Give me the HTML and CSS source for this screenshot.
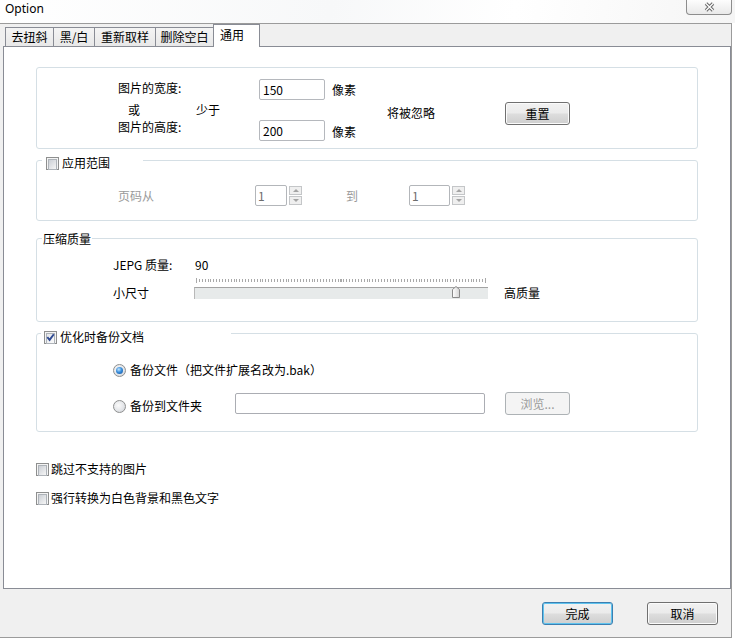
FILE: index.html
```html
<!DOCTYPE html>
<html lang="zh-CN">
<head>
<meta charset="utf-8">
<title>Option</title>
<link rel="stylesheet" href="styles.css">
</head>
<body>
<div class="titlebar">
  <span class="title">Option</span>
  <div class="close-btn">
    <svg class="close-x" width="11" height="10" viewBox="0 0 11 10"><path d="M2 1.5 L9 8.5 M9 1.5 L2 8.5" stroke="#6a6a6a" stroke-width="3.4"/><path d="M2 1.5 L9 8.5 M9 1.5 L2 8.5" stroke="#ffffff" stroke-width="1.3"/></svg>
  </div>
</div>
<div class="client">
  <div class="tabs">
    <div class="tab tab-deskew">去扭斜</div>
    <div class="tab tab-bw">黑/白</div>
    <div class="tab tab-resample">重新取样</div>
    <div class="tab tab-blank">删除空白</div>
    <div class="tab active">通用</div>
  </div>
  <div class="panel">
    <div class="group size-group">
      <div class="size-labels">
        <div class="size-label">图片的宽度:</div>
        <div class="size-label or">或</div>
        <div class="size-label last">图片的高度:</div>
      </div>
      <div class="less">少于</div>
      <div class="size-inputs">
        <input class="textbox size-box" value="150">
        <input class="textbox size-box" value="200">
      </div>
      <div class="units"><div>像素</div><div class="unit-last">像素</div></div>
      <div class="ignored">将被忽略</div>
      <button class="btn reset">重置</button>
    </div>

    <div class="group range-group">
      <div class="legend range-legend"><span class="cb"></span><span>应用范围</span></div>
      <div class="range-row">
        <span class="range-label">页码从</span>
        <input class="spin-box" value="1" disabled>
        <div class="spin-btns"><span class="spin-btn up"></span><span class="spin-btn down"></span></div>
        <span class="range-to">到</span>
        <input class="spin-box wide" value="1" disabled>
        <div class="spin-btns"><span class="spin-btn up"></span><span class="spin-btn down"></span></div>
      </div>
    </div>

    <div class="group quality-group">
      <div class="legend quality-legend">压缩质量</div>
      <div class="quality-grid">
        <span class="q-label">JEPG 质量:</span><span class="q-value">90</span><span></span>
        <span></span><div class="ticks"></div><span></span>
        <span class="q-label q-bottom">小尺寸</span>
        <div class="track">
          <svg class="thumb" width="8" height="12" viewBox="0 0 8 12"><defs><linearGradient id="tg" x1="0" y1="0" x2="1" y2="0"><stop offset="0" stop-color="#ffffff"/><stop offset="1" stop-color="#d4d4d4"/></linearGradient></defs><path d="M0.5 3.5 L4 0.5 L7.5 3.5 V11.5 H0.5 Z" fill="url(#tg)" stroke="#8a8a8a"/></svg>
        </div>
        <span class="q-high q-bottom">高质量</span>
      </div>
    </div>

    <div class="group backup-group">
      <div class="legend backup-legend"><span class="cb checked"><svg width="9" height="9" viewBox="0 0 9 9"><path d="M1.3 4.2 L3.6 6.9 L7.8 1.2" fill="none" stroke="#2f4a92" stroke-width="1.9"/></svg></span><span>优化时备份文档</span></div>
      <div class="backup-row"><span class="radio checked"></span><span>备份文件（把文件扩展名改为.bak）</span></div>
      <div class="backup-row second">
        <div class="radio-label"><span class="radio"></span><span>备份到文件夹</span></div>
        <input class="textbox folder-box" value="">
        <button class="btn browse" disabled>浏览...</button>
      </div>
    </div>

    <div class="check-row first"><span class="cb"></span><span>跳过不支持的图片</span></div>
    <div class="check-row"><span class="cb"></span><span>强行转换为白色背景和黑色文字</span></div>
  </div>
  <div class="footer">
    <button class="btn default">完成</button>
    <button class="btn">取消</button>
  </div>
</div>
</body>
</html>
```

FILE: styles.css
```css
* { box-sizing: border-box; }
html, body { margin: 0; padding: 0; }
body {
  width: 735px;
  height: 640px;
  overflow: hidden;
  background: #ffffff;
  font-family: "Noto Sans CJK SC", "Noto Sans", sans-serif;
  font-size: 12px;
  color: #000;
}

/* buttons (base) */
.btn {
  width: 65px;
  height: 23px;
  border: 1px solid #707070;
  border-radius: 3px;
  background: linear-gradient(#f2f2f2 0%, #ebebeb 48%, #dddddd 52%, #cfcfcf 100%);
  box-shadow: inset 0 0 0 1px #fbfbfb;
  font: inherit;
  color: #000;
  line-height: 19px;
  padding: 0;
  margin: 0;
}
.btn.browse {
  border-color: #adb2b5;
  background: #f4f4f4;
  box-shadow: none;
  color: #9a9a9a;
}
.btn.default {
  border-color: #3c7fb1;
  box-shadow: inset 0 0 0 1px #5fc3ee;
}

/* title bar */
.titlebar {
  height: 23px;
  display: flex;
  justify-content: space-between;
  align-items: flex-start;
  background: linear-gradient(100deg, #ffffff 0%, #f7f8f9 45%, #ffffff 70%, #f5f5f5 100%);
}
.title {
  font-family: "Noto Sans", sans-serif;
  font-size: 12px;
  line-height: 16px;
  padding: 1px 0 0 5px;
}
.close-btn {
  width: 46px;
  height: 15px;
  margin-right: 3px;
  border: 1px solid #8d8d8d;
  border-top: none;
  border-radius: 0 0 4px 4px;
  background: linear-gradient(#fdfdfd, #e9e9e9);
  display: flex;
  align-items: center;
  justify-content: center;
}

/* client */
.client {
  width: 732px;
  height: 615px;
  border: 1px solid #9b9b9b;
  border-left: none;
  background: #f0f0f0;
}
.tabs {
  display: flex;
  align-items: flex-end;
  height: 22px;
  padding-left: 5px;
}
.tab {
  height: 19px;
  border: 1px solid #898c95;
  border-bottom: none;
  margin-left: -1px;
  padding: 0;
  text-align: center;
  line-height: 17px;
  background: linear-gradient(#f4f4f4, #e8e8e8);
  white-space: nowrap;
}
.tab:first-child { margin-left: 0; }
.tab-deskew { width: 49px; }
.tab-bw { width: 42px; }
.tab-resample { width: 62px; }
.tab-blank { width: 59px; }
.tab.active {
  position: relative;
  z-index: 1;
  width: 47px;
  height: 23px;
  margin-bottom: -1px;
  padding-left: 6px;
  text-align: left;
  line-height: 20px;
  background: #ffffff;
}
.panel {
  margin-left: 3px;
  width: 728px;
  height: 543px;
  border: 1px solid #898c95;
  background: #ffffff;
  padding: 20px 0 0 32px;
}

/* group boxes */
.group {
  position: relative;
  width: 662px;
  border: 1px solid #d5dfe5;
  border-radius: 3px;
}
.legend {
  position: absolute;
  display: flex;
  align-items: center;
  gap: 3px;
  height: 16px;
  line-height: 16px;
  background: #ffffff;
  white-space: nowrap;
}

/* size group */
.size-group {
  height: 82px;
  display: flex;
  align-items: flex-start;
  padding: 11px 0 0 81px;
  line-height: 16px;
}
.size-labels { width: 78px; margin-top: 1px; }
.size-label.or { margin-top: 6px; padding-left: 10px; }
.size-label.last { margin-top: 1px; }
.less { width: 63px; margin-top: 23px; }
.size-inputs { display: flex; flex-direction: column; gap: 20px; width: 66px; }
.textbox {
  border: 1px solid #b5b8bd;
  border-radius: 2px;
  background: #fff;
  font: inherit;
  color: #000;
  padding: 0 3px;
  margin: 0;
  outline: none;
}
.size-box { width: 66px; height: 21px; }
.units { margin-left: 7px; width: 55px; margin-top: 3px; }
.unit-last { margin-top: 26px; }
.ignored { width: 118px; margin-top: 26px; }
.size-group .reset { margin-top: 23px; }

/* range group */
.range-group {
  margin-top: 11px;
  height: 61px;
  padding: 24px 0 0 81px;
}
.range-legend { top: -6px; left: 5px; width: 101px; padding-left: 4px; }
.range-row { display: flex; align-items: center; height: 21px; line-height: 16px; }
.range-label { width: 137px; color: #9a9a9a; }
.range-to { margin-left: 44px; width: 12px; color: #9a9a9a; }
.spin-box {
  width: 32px;
  height: 21px;
  border: 1px solid #b3b6ba;
  border-radius: 2px;
  background: #fff;
  color: #6d6d6d;
  font: inherit;
  padding: 0 2px;
  margin: 0;
}
.spin-box.wide { width: 41px; margin-left: 51px; }
.spin-btns { display: flex; flex-direction: column; gap: 1px; margin-left: 2px; }
.spin-btn {
  width: 13px;
  height: 9px;
  border: 1px solid #c4c6c8;
  background: #efefef;
  display: flex;
  align-items: center;
  justify-content: center;
}
.spin-btn::after {
  content: "";
  width: 0;
  height: 0;
  border-left: 3px solid transparent;
  border-right: 3px solid transparent;
}
.spin-btn.up::after { border-bottom: 3px solid #a4a4a4; }
.spin-btn.down::after { border-top: 3px solid #a4a4a4; }

/* quality group */
.quality-group {
  margin-top: 17px;
  height: 84px;
  padding: 18px 0 0 76px;
}
.quality-legend { top: -8px; left: 5px; padding: 0 1px; }
.quality-grid {
  display: grid;
  grid-template-columns: 81px 294px auto;
  grid-template-rows: 16px 10px 16px;
  line-height: 16px;
  align-items: start;
}
.q-value { padding-left: 1px; }
.ticks {
  position: relative;
  align-self: end;
  margin-left: 2px;
  width: 290px;
  height: 5px;
  background: repeating-linear-gradient(to right, #a9a9a9 0 1px, transparent 1px 2.89px) 0 1px / 100% 3px no-repeat;
}
.ticks::before, .ticks::after {
  content: "";
  position: absolute;
  top: 0;
  width: 1px;
  height: 5px;
  background: #a9a9a9;
}
.ticks::before { left: 0; }
.ticks::after { right: 0; }
.q-bottom { margin-top: 2px; }
.track {
  position: relative;
  margin-top: 4px;
  height: 12px;
  background: #e7eaea;
  border-top: 1px solid #a3a3a3;
  border-left: 1px solid #b8b8b8;
}
.thumb { position: absolute; left: 257px; top: -2px; }
.q-high { margin-left: 16px; }

/* backup group */
.backup-group {
  margin-top: 11px;
  height: 99px;
  padding: 28px 0 0 76px;
  line-height: 16px;
}
.backup-legend { top: -5px; left: 4px; width: 190px; padding-left: 3px; }
.backup-row { display: flex; align-items: center; gap: 4px; height: 16px; }
.backup-row.second { align-items: flex-start; height: 23px; gap: 0; margin-top: 14px; }
.radio-label { display: flex; align-items: center; gap: 4px; width: 122px; height: 16px; margin-top: 6px; }
.folder-box { width: 250px; height: 21px; margin-top: 1px; border-color: #abadb3; }
.backup-row .browse { margin-left: 20px; }

/* checkbox & radio */
.cb {
  flex: none;
  width: 13px;
  height: 13px;
  border: 1px solid #8e8f8f;
  background: #f4f4f4;
  padding: 1px;
  display: flex;
}
.cb::before {
  content: "";
  width: 9px;
  height: 9px;
  border: 1px solid #aeb3b9;
  background: linear-gradient(135deg, #cbcfd5, #f6f6f6);
}
.cb.checked { position: relative; }
.cb.checked::before { background: linear-gradient(135deg, #e4e6ea, #fbfbfb); }
.cb.checked svg { position: absolute; left: 1px; top: 1px; }
.radio {
  flex: none;
  width: 13px;
  height: 13px;
  border-radius: 50%;
  border: 1px solid #8e8f8f;
  background: radial-gradient(circle at 40% 40%, #fbfbfb 0%, #e4e6e9 55%, #c9cdd3 100%);
  display: flex;
  align-items: center;
  justify-content: center;
}
.radio.checked::after {
  content: "";
  width: 7px;
  height: 7px;
  border-radius: 50%;
  background: radial-gradient(circle at 40% 35%, #c4e6ff 0%, #3a8fdc 45%, #0d4a98 100%);
}

/* bottom checkboxes */
.check-row {
  display: flex;
  align-items: center;
  gap: 2px;
  height: 16px;
  line-height: 16px;
  margin-top: 13px;
}
.check-row.first { margin-top: 29px; }

/* footer */
.footer {
  display: flex;
  justify-content: flex-end;
  gap: 34px;
  margin-top: 13px;
  padding-right: 13px;
}
.footer .btn { width: 71px; }
```
